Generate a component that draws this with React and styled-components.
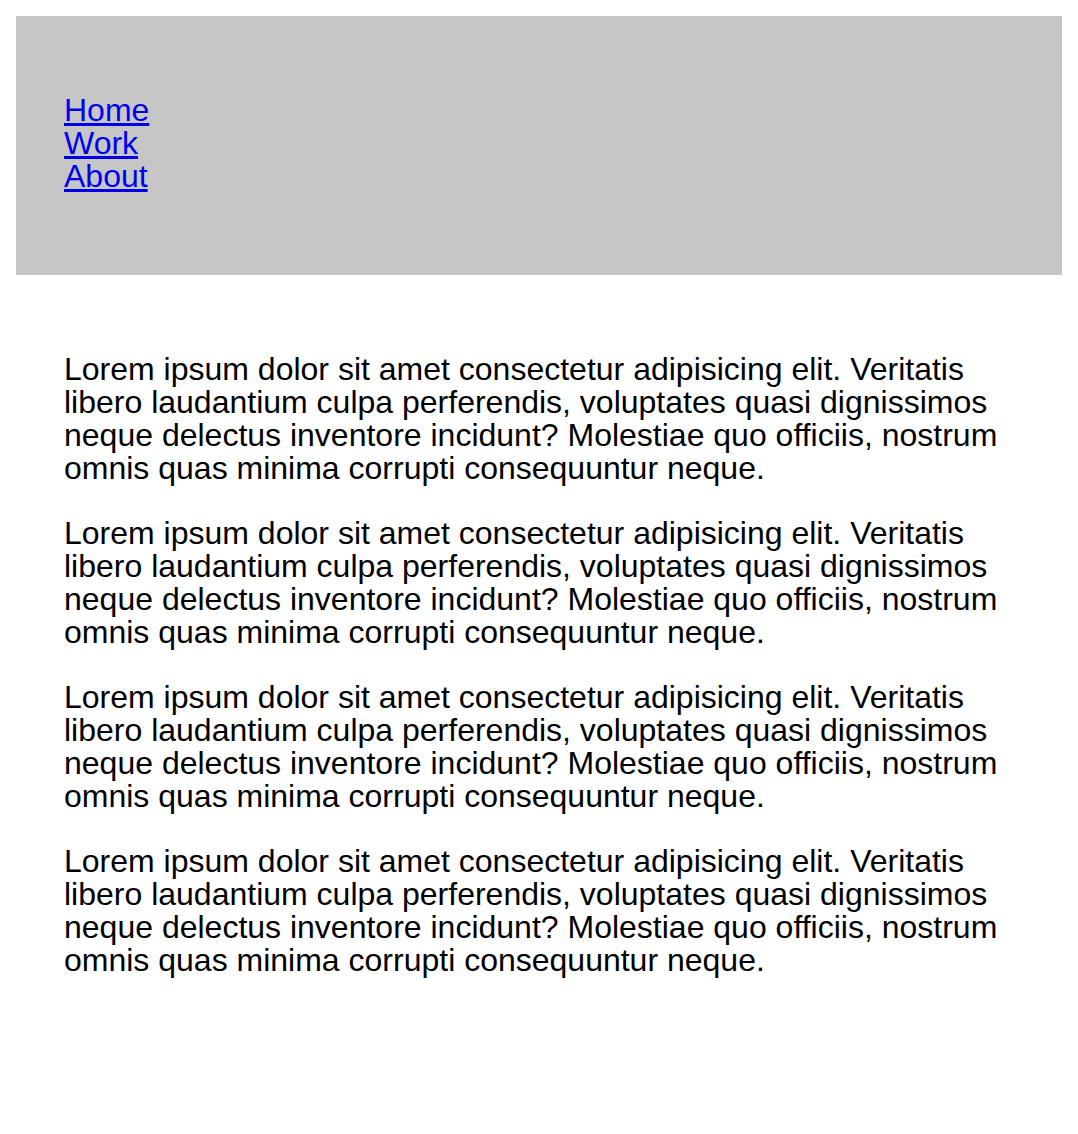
import React from "react";
import styled, { createGlobalStyle } from "styled-components";

const GlobalStyle = createGlobalStyle`
  body {
    margin: 16px;
    background: #ffffff;
    font-family: "Liberation Sans", Arial, Helvetica, sans-serif;
    color: #000000;
  }
`;

const text =
  "Lorem ipsum dolor sit amet consectetur adipisicing elit. Veritatis libero laudantium culpa perferendis, voluptates quasi dignissimos neque delectus inventore incidunt? Molestiae quo officiis, nostrum omnis quas minima corrupti consequuntur neque.";

const App = () => {
  return (
    <>
      <GlobalStyle />
      <Header>
        <Nav>
          <NavLink href="#">Home</NavLink>
          <NavLink href="#">Work</NavLink>
          <NavLink href="#">About</NavLink>
        </Nav>
      </Header>
      <Main>
        {[0, 1, 2, 3].map((i) => (
          <Paragraph key={i}>{text}</Paragraph>
        ))}
      </Main>
    </>
  );
};

const Header = styled.header`
  background-color: #c6c6c6;
  padding: 78px 48px 82px;
`;

const Nav = styled.nav`
  display: flex;
  flex-direction: column;
  align-items: flex-start;
`;

const NavLink = styled.a`
  font-size: 32px;
  line-height: 33px;
  color: #0000ee;
  text-decoration: underline;
`;

const Main = styled.main`
  padding: 46px 48px 48px;
`;

const Paragraph = styled.p`
  font-size: 32px;
  line-height: 33px;
  margin: 32px 0;
`;

export default App;
